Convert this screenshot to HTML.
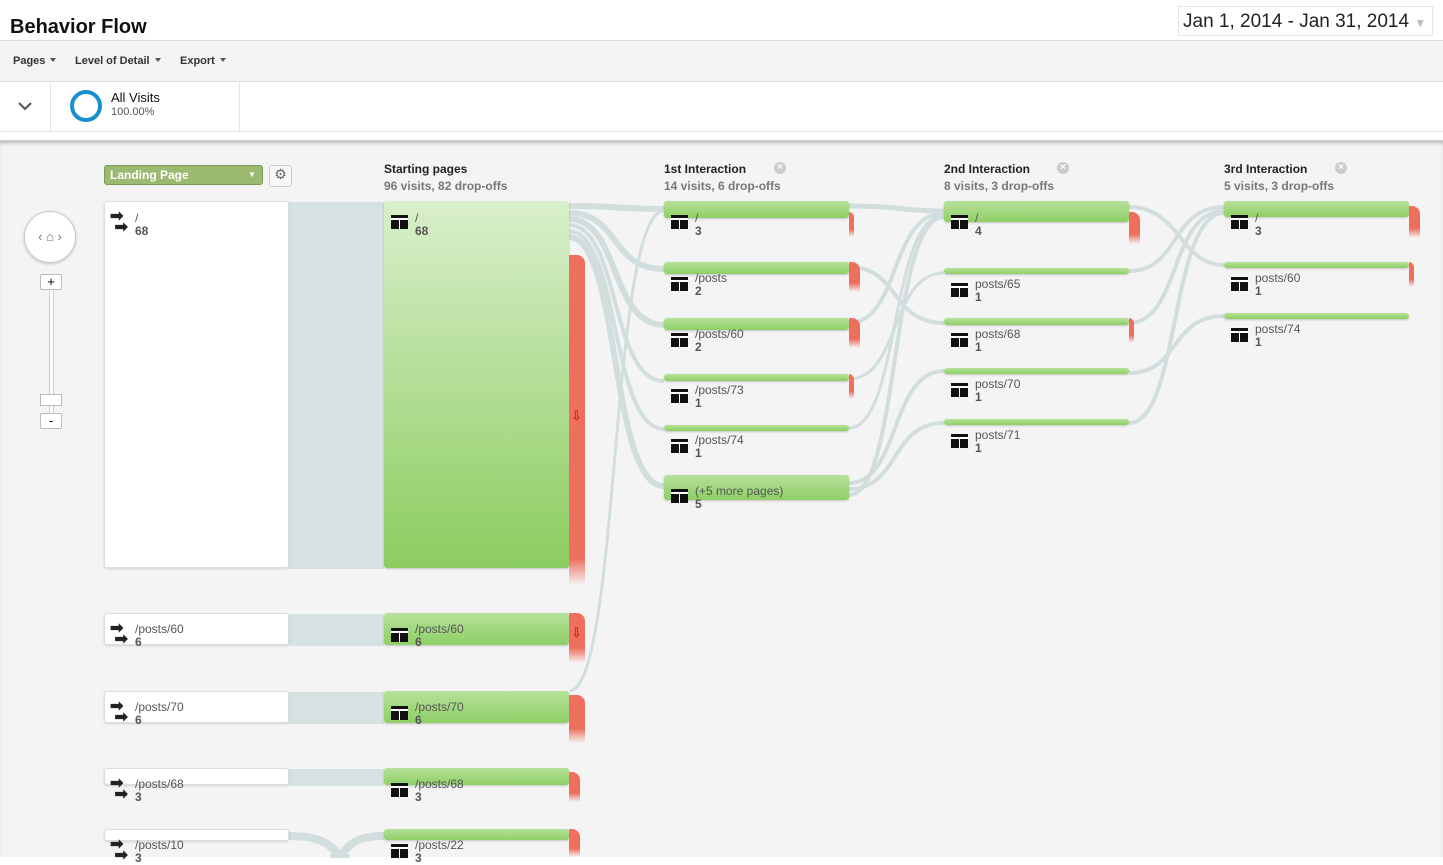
<!DOCTYPE html>
<html><head><meta charset="utf-8"><style>
*{margin:0;padding:0;box-sizing:border-box}
body{width:1443px;height:857px;overflow:hidden;font-family:"Liberation Sans",Arial,sans-serif;background:#fff;position:relative}
.a{position:absolute}
.h1{left:10px;top:16px;font-size:20px;font-weight:bold;color:#111}
.date{left:1178px;top:6px;width:255px;height:30px;border:1px solid #e4e4e4;font-size:19px;color:#222;padding:4px 0 0 4px;background:#fff}
.bar{left:0;top:40px;width:1443px;height:42px;background:#f4f4f4;border-top:1px solid #ddd;border-bottom:1px solid #e2e2e2;font-size:11px;font-weight:bold;color:#333}
.bar span{position:absolute;top:14px}
.tri{display:inline-block;border:3.5px solid transparent;border-top:4px solid #555;margin-left:5px;vertical-align:-1px}
.seg{left:0;top:82px;width:1443px;height:50px;border-bottom:1px solid #e2e2e2;background:#fff}
.flow{left:0;top:140px;width:1443px;height:717px;background:#f4f4f4;border-top:1px solid #ccc;box-shadow:inset 0 4px 4px -2px rgba(0,0,0,.25)}
.hd{font-size:12px;font-weight:bold;color:#222}
.hd small{display:block;font-size:12px;color:#777;margin-top:3px}
.x{position:absolute;left:110px;top:0;width:12px;height:12px;border-radius:50%;background:#ccc;color:#fff;font-size:10px;line-height:12px;text-align:center}
.wb{background:#fff;border:1px solid #ddd;border-radius:3px;box-shadow:0 1px 2px rgba(0,0,0,.15)}
.gb{background:linear-gradient(#b6e19a,#8fcf66);border-radius:3px;box-shadow:0 1px 2px rgba(0,0,0,.2)}
.rd{background:linear-gradient(#ef6f5f 70%,rgba(239,111,95,0));border-radius:0 8px 0 0}
.lb{font-size:12px;color:#555;line-height:13px}
.lb b{display:block;color:#555}
.ic{width:17px;height:14px;background:#111;position:absolute}
.ic:before{content:"";position:absolute;left:0;top:3px;width:17px;height:1.5px;background:#fff}
.ic:after{content:"";position:absolute;left:7.5px;top:4px;width:1.5px;height:10px;background:#fff}
.ar{position:absolute;font-size:16px;font-weight:bold;color:#222;line-height:11px}
</style></head><body>
<div class="a h1">Behavior Flow</div>
<div class="a date">Jan 1, 2014 - Jan 31, 2014 <span style="color:#bbb;font-size:12px">▼</span></div>
<div class="a bar"><span style="left:13px">Pages<i class="tri"></i></span><span style="left:75px">Level of Detail<i class="tri"></i></span><span style="left:180px">Export<i class="tri"></i></span></div>
<div class="a seg">
 <div class="a" style="left:50px;top:0;width:1px;height:50px;background:#e5e5e5"></div>
 <div class="a" style="left:239px;top:0;width:1px;height:50px;background:#e5e5e5"></div>
 <svg class="a" style="left:18px;top:19px" width="14" height="10"><path d="M1 2l6 6 6-6" stroke="#555" stroke-width="2" fill="none"/></svg>
 <div class="a" style="left:70px;top:8px;width:32px;height:32px;border:4px solid #1a8fcf;border-radius:50%"></div>
 <div class="a" style="left:111px;top:8px;font-size:13px;color:#111">All Visits</div>
 <div class="a" style="left:111px;top:24px;font-size:11px;color:#555">100.00%</div>
</div>
<div class="a flow">
<svg class="a" style="left:0;top:0" width="1443" height="717" fill="none" stroke="#d2dede">
<g transform="translate(0,-140)">
<rect x="289" y="201" width="95" height="367" fill="#d6e1e1" stroke="none"/>
<rect x="289" y="613" width="95" height="32" fill="#d6e1e1" stroke="none"/>
<rect x="289" y="691" width="95" height="32" fill="#d6e1e1" stroke="none"/>
<rect x="289" y="768" width="95" height="17" fill="#d6e1e1" stroke="none"/>
<path d="M289 835 C340 835 330 857 350 857 M384 835 C340 835 350 857 330 857" stroke-width="8"/>
<path d="M569 205 C620 205 620 208 664 208" stroke-width="6"/>
<path d="M569 212 C620 212 610 268 664 268" stroke-width="6"/>
<path d="M569 218 C620 218 610 324 664 324" stroke-width="6"/>
<path d="M569 224 C620 224 610 380 664 380" stroke-width="4"/>
<path d="M569 230 C620 230 610 428 664 428" stroke-width="4"/>
<path d="M569 236 C620 236 610 485 664 485" stroke-width="6"/>
<path d="M569 690 C620 690 610 210 664 210" stroke-width="3"/>
<path d="M849 205 C900 205 900 210 944 210" stroke-width="5"/>
<path d="M849 266 C900 266 890 322 944 322" stroke-width="4"/>
<path d="M849 322 C900 322 890 212 944 212" stroke-width="4"/>
<path d="M849 378 C900 378 890 272 944 272" stroke-width="3"/>
<path d="M849 427 C900 427 890 214 944 214" stroke-width="3"/>
<path d="M849 482 C900 482 890 370 944 370" stroke-width="4"/>
<path d="M849 488 C900 488 890 422 944 422" stroke-width="4"/>
<path d="M849 494 C900 494 890 216 944 216" stroke-width="4"/>
<path d="M1129 206 C1180 206 1180 264 1224 264" stroke-width="4"/>
<path d="M1129 270 C1180 270 1170 206 1224 206" stroke-width="4"/>
<path d="M1129 322 C1180 322 1170 210 1224 210" stroke-width="4"/>
<path d="M1129 372 C1180 372 1170 315 1224 315" stroke-width="4"/>
<path d="M1129 422 C1180 422 1170 212 1224 212" stroke-width="4"/>
</g></svg>
<div class="a" style="left:104px;top:24px;width:159px;height:20px;background:#9cb970;border:1px solid #7f9a58;border-radius:3px;color:#fff;font-size:12px;font-weight:bold;padding:2px 5px">Landing Page<span style="position:absolute;right:6px;font-size:8px;top:4px">▼</span></div>
<div class="a" style="left:269px;top:24px;width:23px;height:22px;border:1px solid #ccc;border-radius:3px;background:#f8f8f8;color:#666;text-align:center;font-size:14px">⚙</div>
<div class="a hd" style="left:384px;top:21px">Starting pages<small>96 visits, 82 drop-offs</small></div>
<div class="a hd" style="left:664px;top:21px;width:130px">1st Interaction<small>14 visits, 6 drop-offs</small><span class="x">×</span></div>
<div class="a hd" style="left:944px;top:21px;width:130px">2nd Interaction<small>8 visits, 3 drop-offs</small><span class="x" style="left:113px">×</span></div>
<div class="a hd" style="left:1224px;top:21px;width:130px">3rd Interaction<small>5 visits, 3 drop-offs</small><span class="x" style="left:111px">×</span></div>
<div class="a" style="left:24px;top:70px;width:52px;height:52px;border-radius:50%;background:#fff;border:1px solid #ccc;box-shadow:0 1px 3px rgba(0,0,0,.2);text-align:center;line-height:50px;color:#777;font-size:13px">‹ ⌂ ›</div>
<div class="a" style="left:49px;top:142px;width:5px;height:140px;background:#fff;border:1px solid #ccc"></div>
<div class="a" style="left:40px;top:133px;width:22px;height:16px;background:#fff;border:1px solid #bbb;border-radius:2px;text-align:center;font-size:13px;line-height:14px">+</div>
<div class="a" style="left:40px;top:253px;width:22px;height:12px;background:#fff;border:1px solid #bbb"></div>
<div class="a" style="left:40px;top:272px;width:22px;height:16px;background:#fff;border:1px solid #bbb;border-radius:2px;text-align:center;font-size:13px;line-height:14px">-</div>
</div>
<div class="a wb" style="left:104px;top:201px;width:185px;height:367px"></div>
<div class="a wb" style="left:104px;top:613px;width:185px;height:32px"></div>
<div class="a wb" style="left:104px;top:691px;width:185px;height:32px"></div>
<div class="a wb" style="left:104px;top:768px;width:185px;height:17px"></div>
<div class="a wb" style="left:104px;top:829px;width:185px;height:12px"></div>
<div class="a" style="left:384px;top:201px;width:185px;height:367px;background:linear-gradient(#d9efcb,#8ccd60);border-radius:3px;box-shadow:0 1px 2px rgba(0,0,0,.2)"></div>
<div class="a rd" style="left:569px;top:255px;width:16px;height:330px;background:linear-gradient(#ef6f5f 92%,rgba(239,111,95,0))"></div>
<div class="a" style="left:571px;top:408px;color:#c00;font-size:13px">⇩</div>
<div class="a gb" style="left:384px;top:613px;width:185px;height:32px"></div>
<div class="a rd" style="left:569px;top:613px;width:16px;height:50px"></div>
<div class="a" style="left:571px;top:625px;color:#c00;font-size:13px">⇩</div>
<div class="a gb" style="left:384px;top:691px;width:185px;height:32px"></div>
<div class="a rd" style="left:569px;top:695px;width:16px;height:48px"></div>
<div class="a gb" style="left:384px;top:768px;width:185px;height:17px"></div>
<div class="a rd" style="left:569px;top:772px;width:11px;height:30px"></div>
<div class="a gb" style="left:384px;top:829px;width:185px;height:11px"></div>
<div class="a rd" style="left:569px;top:829px;width:11px;height:28px"></div>
<div class="a gb" style="left:664px;top:201px;width:185px;height:17px"></div><div class="a rd" style="left:849px;top:212px;width:5px;height:25px"></div>
<div class="a gb" style="left:664px;top:262px;width:185px;height:12px"></div><div class="a rd" style="left:849px;top:262px;width:11px;height:30px"></div>
<div class="a gb" style="left:664px;top:318px;width:185px;height:12px"></div><div class="a rd" style="left:849px;top:318px;width:11px;height:30px"></div>
<div class="a gb" style="left:664px;top:374px;width:185px;height:7px"></div><div class="a rd" style="left:849px;top:374px;width:5px;height:25px"></div>
<div class="a gb" style="left:664px;top:425px;width:185px;height:6px"></div>
<div class="a gb" style="left:664px;top:475px;width:185px;height:25px"></div>
<div class="a gb" style="left:944px;top:201px;width:185px;height:21px"></div><div class="a rd" style="left:1129px;top:212px;width:11px;height:32px"></div>
<div class="a gb" style="left:944px;top:268px;width:185px;height:6px"></div>
<div class="a gb" style="left:944px;top:318px;width:185px;height:7px"></div><div class="a rd" style="left:1129px;top:318px;width:5px;height:25px"></div>
<div class="a gb" style="left:944px;top:368px;width:185px;height:6px"></div>
<div class="a gb" style="left:944px;top:419px;width:185px;height:6px"></div>
<div class="a gb" style="left:1224px;top:201px;width:185px;height:16px"></div><div class="a rd" style="left:1409px;top:206px;width:11px;height:32px"></div>
<div class="a gb" style="left:1224px;top:262px;width:185px;height:6px"></div><div class="a rd" style="left:1409px;top:262px;width:5px;height:25px"></div>
<div class="a gb" style="left:1224px;top:313px;width:185px;height:6px"></div>
<div class="a ar" style="left:110px;top:211px">➡<br>&nbsp;➡</div><div class="a lb" style="left:135px;top:212px">/<b>68</b></div>
<div class="a ar" style="left:110px;top:623px">➡<br>&nbsp;➡</div><div class="a lb" style="left:135px;top:623px">/posts/60<b>6</b></div>
<div class="a ar" style="left:110px;top:701px">➡<br>&nbsp;➡</div><div class="a lb" style="left:135px;top:701px">/posts/70<b>6</b></div>
<div class="a ar" style="left:110px;top:778px">➡<br>&nbsp;➡</div><div class="a lb" style="left:135px;top:778px">/posts/68<b>3</b></div>
<div class="a ar" style="left:110px;top:839px">➡<br>&nbsp;➡</div><div class="a lb" style="left:135px;top:839px">/posts/10<b>3</b></div>
<div class="ic" style="left:391px;top:215px"></div><div class="a lb" style="left:415px;top:212px">/<b>68</b></div>
<div class="ic" style="left:391px;top:628px"></div><div class="a lb" style="left:415px;top:623px">/posts/60<b>6</b></div>
<div class="ic" style="left:391px;top:706px"></div><div class="a lb" style="left:415px;top:701px">/posts/70<b>6</b></div>
<div class="ic" style="left:391px;top:783px"></div><div class="a lb" style="left:415px;top:778px">/posts/68<b>3</b></div>
<div class="ic" style="left:391px;top:844px"></div><div class="a lb" style="left:415px;top:839px">/posts/22<b>3</b></div>
<div class="ic" style="left:671px;top:215px"></div><div class="a lb" style="left:695px;top:212px">/<b>3</b></div>
<div class="ic" style="left:671px;top:277px"></div><div class="a lb" style="left:695px;top:272px">/posts<b>2</b></div>
<div class="ic" style="left:671px;top:333px"></div><div class="a lb" style="left:695px;top:328px">/posts/60<b>2</b></div>
<div class="ic" style="left:671px;top:389px"></div><div class="a lb" style="left:695px;top:384px">/posts/73<b>1</b></div>
<div class="ic" style="left:671px;top:439px"></div><div class="a lb" style="left:695px;top:434px">/posts/74<b>1</b></div>
<div class="ic" style="left:671px;top:489px"></div><div class="a lb" style="left:695px;top:485px">(+5 more pages)<b>5</b></div>
<div class="ic" style="left:951px;top:215px"></div><div class="a lb" style="left:975px;top:212px">/<b>4</b></div>
<div class="ic" style="left:951px;top:283px"></div><div class="a lb" style="left:975px;top:278px">posts/65<b>1</b></div>
<div class="ic" style="left:951px;top:333px"></div><div class="a lb" style="left:975px;top:328px">posts/68<b>1</b></div>
<div class="ic" style="left:951px;top:383px"></div><div class="a lb" style="left:975px;top:378px">posts/70<b>1</b></div>
<div class="ic" style="left:951px;top:434px"></div><div class="a lb" style="left:975px;top:429px">posts/71<b>1</b></div>
<div class="ic" style="left:1231px;top:215px"></div><div class="a lb" style="left:1255px;top:212px">/<b>3</b></div>
<div class="ic" style="left:1231px;top:277px"></div><div class="a lb" style="left:1255px;top:272px">posts/60<b>1</b></div>
<div class="ic" style="left:1231px;top:328px"></div><div class="a lb" style="left:1255px;top:323px">posts/74<b>1</b></div>
</body></html>
